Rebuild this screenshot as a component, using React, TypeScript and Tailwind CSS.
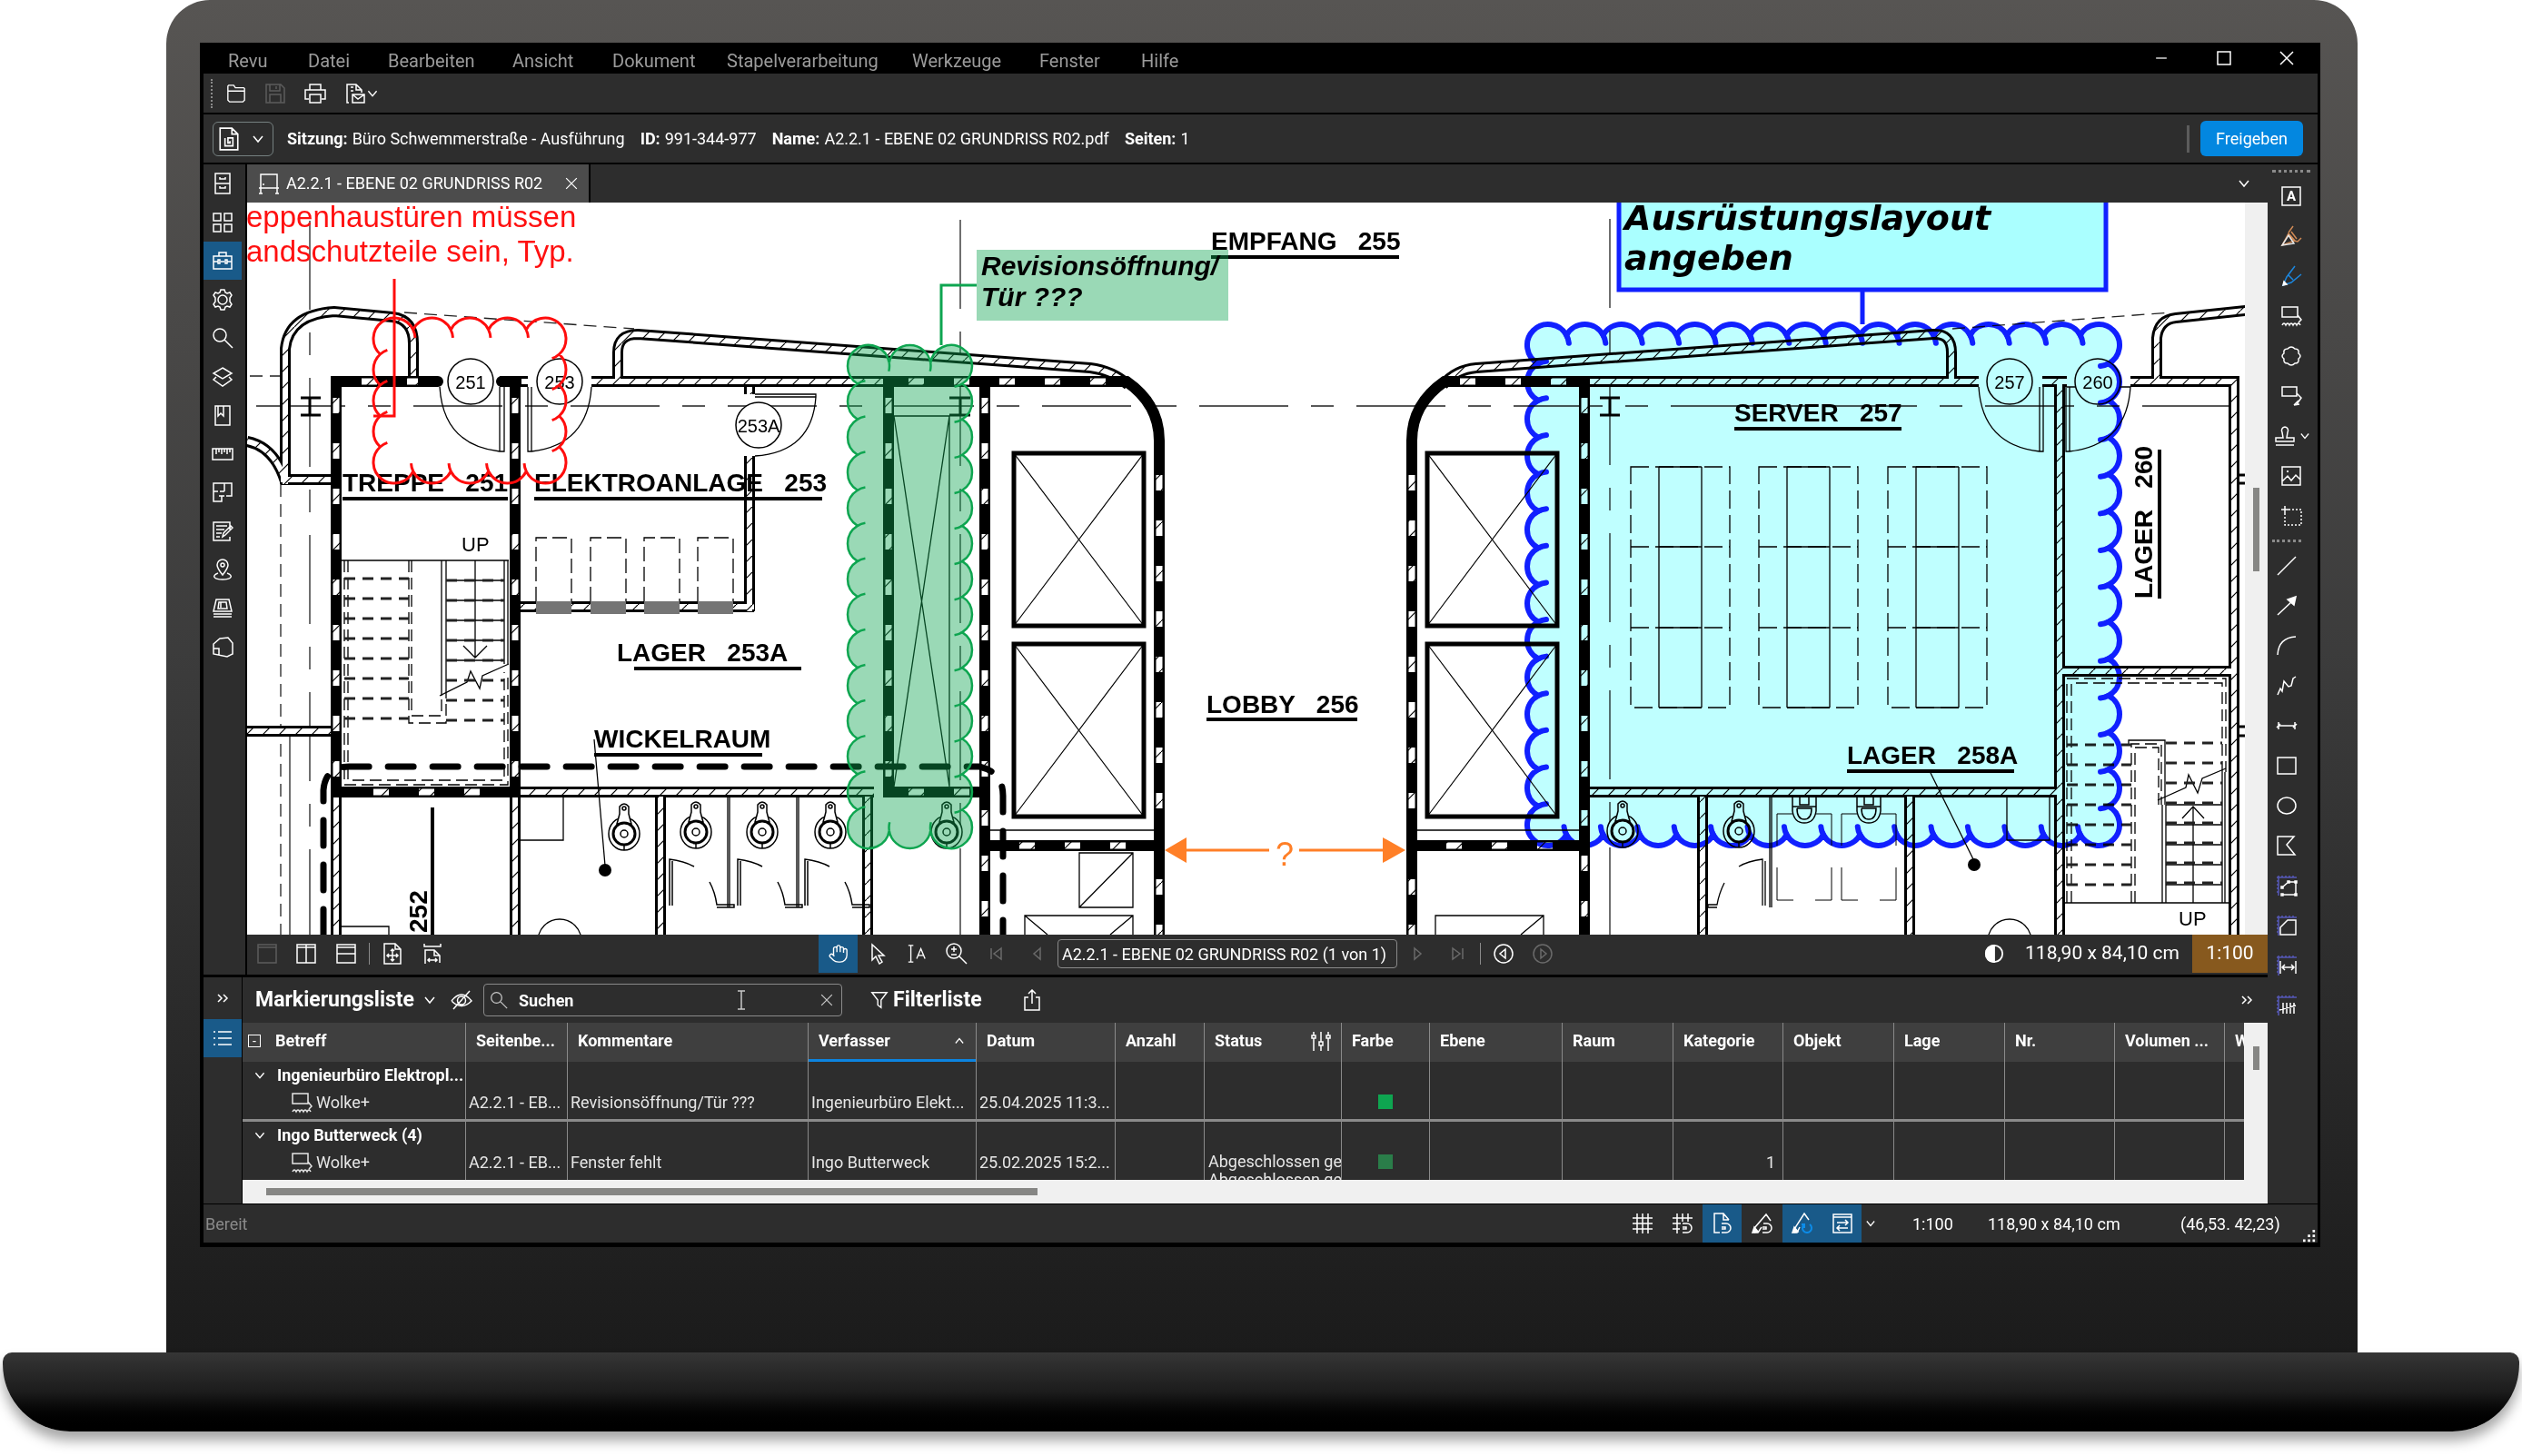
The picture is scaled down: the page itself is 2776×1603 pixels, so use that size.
import React from "react";

type IconName = keyof typeof iconPaths;

// 24x24 outlines, drawn with currentColor
const iconPaths = {
    folder: "M2 9V3l1-1h6l2 3h10l1 1v14l-2 2H4l-2-2V9h20",
    save: "M2 2h16l4 4v16H2zM6 2v7h11V2M13 4v3M6 22v-9h12v9",
    print: "M6 8V2h12v6M5 18H1V8h22v10h-4M6 13h12v9H6z",
    mail: "M5 22H3V2h10l6 6v3M13 2v6h6M7 5h3M7 9h3M9 13h13v9H9zM9 13l6 5 7-5",
    chevronDown: "M7 9l5 6 5-6",
    chevronUp: "M7 15l5-6 5 6",
    chevronsRight: "M7 8l4 4-4 4M13 8l4 4-4 4",
    close: "M5 5l14 14M19 5L5 19",
    minimize: "M5 12h14",
    maximize: "M5 5h14v14H5z",
    studio: "M3 1h12l6 6v16H3zM15 1v6h6M8 11v8h8v-8h-5v5h2v-2",
    sheet: "M3 17V2h18v15M1 17h22M3 17v6M21 17v6M1 23h4M19 23h4M5 13h2",
    cabinet: "M4 1h16v22H4zM4 12h16M9 5v2h6V5M9 15v2h6v-2",
    grid: "M2 2h8v8H2zM14 2h8v8h-8zM2 14h8v8H2zM14 14h8v8h-8z",
    toolbox: "M2 7h20v14H2zM8 7V3h8v4M2 13h5M10 13h4M17 13h5M7 11v4h2v-4zM15 11v4h2v-4z",
    gear: "M10 1h4l1 3 2 1 3-1 2 3-2 3v4l2 3-2 3-3-1-2 1-1 3h-4l-1-3-2-1-3 1-2-3 2-3v-4L2 7l2-3 3 1 2-1zM12 7a5 5 0 1 0 0 10a5 5 0 1 0 0-10",
    search: "M9 2a7 7 0 1 0 0 14a7 7 0 1 0 0-14M14 14l9 9",
    layers: "M12 2l10 6-10 6L2 8zM5 12l-3 3 10 7 10-7-3-3",
    bookmark: "M4 2h16v21H4zM7 2v11l3-3 3 3V2",
    ruler: "M1 6h22v12H1zM5 6v6M8 6v4M11 6v6M14 6v4M17 6v6M20 6v4",
    spaces: "M2 11V2h20v14h-6M2 11h5M9 11h5M14 2v9M2 11v11h9v-6M8 16h6",
    form: "M20 10V2H2v20h18v-4M5 6h12M5 10h9M5 14h6M5 18h4M12 18l1-4 8-8 2 2-8 8z",
    pin: "M12 18C8 13 6 10 6 7a6 6 0 1 1 12 0c0 3-2 6-6 11zM12 5a2 2 0 1 0 0 4a2 2 0 1 0 0-4M7 16c-8 3-4 7 5 7s13-4 5-7",
    plot: "M5 2h14l3 13H2zM8 5h8l1 7H7zM10 5v6M2 18h20M2 21h20",
    polygon: "M9 3l9-1 5 6v12l-6 3-15-3V9zM2 20v-6h6v7",
    textBox: "M2 2h20v20H2z",
    highlight: "M8 10l7 7 4 1 4-4M12 7l6 8M14 1l-5 7M2 22l7-13 7 8z",
    pen: "M16 1L7 13l-4 9 9-3L23 10M9 11l5 5",
    cloudPlus: "M2 2h17v11H2zM19 11l4 5-3 3M2 22q2-4 4 0q2-4 4 0q2-4 4 0q2-4 4 0q2-4 4 0",
    cloud: "M8 4q4-4 8 0q5 0 4 5q4 3 0 6q1 5-4 5q-4 4-8 0q-5 0-4-5q-4-3 0-6q-1-5 4-5z",
    callout: "M2 2h16v10H2zM18 9l5 5-5 7M20 17l-5 5M15 22l6-1",
    stamp: "M12 2a4 4 0 0 0-3 6l1 6H2v4h20v-4h-8l1-6a4 4 0 0 0-3-6M2 22h20",
    image: "M2 2h20v20H2zM2 18l6-6 4 5 5-6 5 5M8 6v2M7 7h2",
    line: "M2 22L22 2",
    arrow: "M2 22L19 6",
    arc: "M2 22Q3 3 22 2",
    polyline: "M2 22l3-7 2 3 2-11 5 6 3-1 2-8 3-2",
    dimension: "M3 12h18M3 8v8M21 8v8M1 14l4-4M19 14l4-4",
    rect: "M2 3h20v18H2z",
    ellipse: "M12 3a10 9 0 1 0 0 18a10 9 0 1 0 0-18",
    flag: "M2 2h18l-8 9 9 11H2z",
    onePage: "M2 2h20v20H2zM2 5h20",
    twoCols: "M2 2h20v20H2zM12 2v20M2 5h20",
    twoRows: "M2 2h20v20H2zM2 12h20M2 5h20",
    fitPage: "M3 1h12l6 6v16H3zM15 1v6h6M12 7v13M6 14h12M10 9l2-2 2 2M10 18l2 2 2-2M8 12l-2 2 2 2M16 12l2 2-2 2",
    fitWidth: "M3 1v3h18V1M4 22V8h10l6 6v8M14 8v6h6M4 22v1M7 19h10M9 17l-2 2 2 2M15 17l2 2-2 2",
    hand: "M18 11V6a2 2 0 0 0-4 0M14 10V4a2 2 0 0 0-4 0v2M10 10V6a2 2 0 0 0-4 0v8M18 8a2 2 0 1 1 4 0v6a8 8 0 0 1-8 8h-2c-3 0-5-1-6-2l-4-4a2 2 0 0 1 3-3L7 15",
    cursor: "M6 2v17l4-4 4 8 3-2-4-7h6z",
    textSelect: "M2 2h6M5 2v20M2 22h6M12 18l5-12 5 12M14 14h6",
    zoom: "M9 1a8 8 0 1 0 0 16a8 8 0 1 0 0-16M15 15l8 8M9 4v6M6 7h6M6 13h6",
    first: "M6 6v12M17 6l-8 6 8 6z",
    prev: "M15 6l-7 6 7 6z",
    next: "M9 6l7 6-7 6z",
    last: "M18 6v12M7 6l8 6-8 6z",
    back: "M12 2a10 10 0 1 0 0 20a10 10 0 1 0 0-20M14 7l-6 5 6 5z",
    forward: "M12 2a10 10 0 1 0 0 20a10 10 0 1 0 0-20M10 7l6 5-6 5z",
    eyeOff: "M1 13q11-14 22 0q-11 11-22 0M12 8a4 4 0 1 0 0 9a4 4 0 1 0 0-9M3 22L21 2",
    filter: "M3 3h18l-7 9v9l-4-3v-6z",
    share: "M8 9H4v14h16V9h-4M12 16V1M8 5l4-4 4 4",
    list: "M7 5h15M7 12h15M7 19h15M2 5h2M2 12h2M2 19h2",
    sliders: "M4 2v4M4 9v14M12 2v11M12 17v6M20 2v4M20 9v14M2 6h4v3H2zM10 13h4v4h-4zM18 6h4v3h-4z",
    raster: "M6 1v22M12 1v22M18 1v22M1 6h22M1 12h22M1 18h22",
    snapGrid: "M6 1v22M12 1v9M18 1v9M1 6h22M1 12h9M1 18h8M12 12h5a5 5 0 0 1 0 10h-5M12 16h4v2h-4",
    snapDoc: "M9 22H3V1h10l6 7M13 1v7h6M11 12h5a5 5 0 0 1 0 10h-5M11 16h4v2h-4",
    snapPen: "M2 22l2-6L16 2l5 7M2 22h5l4-6M13 12h4a5 5 0 0 1 0 10h-5M12 16h4v2h-4",
    reuse: "M2 22l3-7L14 1l5 7M2 22h4l3-6",
    sync: "M2 2h20v20H2zM2 5h20M6 11h11M15 8l3 3-3 3M18 17H7M9 14l-3 3 3 3",
    measureArea: "M7 14l7-6h8v14H7M6 13h2v2H6zM13 7h2v2h-2zM21 7h2v2h-2zM21 21h2v2h-2zM6 21h2v2H6z",
    measurePoly: "M5 22V14l8-8h9v16z",
    measureLength: "M5 7v14M22 7v14M7 14h13M10 11l-3 3 3 3M17 11l3 3-3 3",
    measureCount: "M8 9v12M12 9v12M16 9v12M20 9v12M4 17l18-5",
};

type IconProps = { name: IconName; className?: string };

const Icon: React.FC<IconProps> = ({ name, className = "size-6" }) => (
    <svg viewBox="0 0 24 24" className={`shrink-0 ${className}`} fill="none" stroke="currentColor" strokeWidth={1.5} aria-hidden="true">
        <path d={iconPaths[name]} />
        {name.startsWith("measure") && (
            <path d="M1 3h22M3 1v22M7 1v2M11 1v2M15 1v2M19 1v2M1 7h2M1 11h2M1 15h2M1 19h2" stroke="#5558b8" />
        )}
        {name === "arrow" && <path d="M22 2l-2 9-7-6z" fill="currentColor" />}
        {name === "pen" && <path d="M3 22l1-4 3 3z" fill="white" stroke="white" />}
        {name === "highlight" && <path d="M2 22l7-11 6 9z" stroke="#e8e8e8" />}
        {name === "reuse" && <path d="M20 13a5 5 0 1 1-6 0M14 17v-4h-3" stroke="#0c8ce9" strokeWidth={2} />}
        {(name === "reuse" || name === "snapPen") && <path d="M1 22l2-6 4 5z" fill="currentColor" />}
    </svg>
);

type ToolButtonProps = { icon: IconName; label: string; className: string; iconClass?: string; children?: React.ReactNode };

const ToolButton: React.FC<ToolButtonProps> = ({ icon, label, className, iconClass, children }) => (
    <button type="button" aria-label={label} className={`flex shrink-0 items-center justify-center ${className}`}>
        <Icon name={icon} className={iconClass} />
        {children}
    </button>
);

const menuItems = [
    { label: "Revu", width: "w-[88px]" },
    { label: "Datei", width: "w-[88px]" },
    { label: "Bearbeiten", width: "w-[137px]" },
    { label: "Ansicht", width: "w-[110px]" },
    { label: "Dokument", width: "w-[126px]" },
    { label: "Stapelverarbeitung", width: "w-[204px]" },
    { label: "Werkzeuge", width: "w-[140px]" },
    { label: "Fenster", width: "w-[112px]" },
    { label: "Hilfe", width: "w-[60px]" },
];

const leftTools: { icon: IconName; label: string }[] = [
    { icon: "cabinet", label: "Dateizugriff" },
    { icon: "grid", label: "Miniaturansichten" },
    { icon: "toolbox", label: "Werkzeugkasten" },
    { icon: "gear", label: "Eigenschaften" },
    { icon: "search", label: "Suche" },
    { icon: "layers", label: "Ebenen" },
    { icon: "bookmark", label: "Lesezeichen" },
    { icon: "ruler", label: "Messungen" },
    { icon: "spaces", label: "Bereiche" },
    { icon: "form", label: "Formulare" },
    { icon: "pin", label: "Orte" },
    { icon: "plot", label: "Sets" },
    { icon: "polygon", label: "3D-Modell" },
];

const markupTools: { icon: IconName; label: string; color?: string }[] = [
    { icon: "textBox", label: "Textfeld" },
    { icon: "highlight", label: "Hervorheben", color: "text-[#d08a55]" },
    { icon: "pen", label: "Stift", color: "text-[#1c86dd]" },
    { icon: "cloudPlus", label: "Wolke+" },
    { icon: "cloud", label: "Wolke" },
    { icon: "callout", label: "Legende" },
    { icon: "stamp", label: "Stempel" },
    { icon: "image", label: "Bild" },
];

const shapeTools: { icon: IconName; label: string }[] = [
    { icon: "line", label: "Linie" },
    { icon: "arrow", label: "Pfeil" },
    { icon: "arc", label: "Bogen" },
    { icon: "polyline", label: "Polylinie" },
    { icon: "dimension", label: "Bemaßung" },
    { icon: "rect", label: "Rechteck" },
    { icon: "ellipse", label: "Ellipse" },
    { icon: "flag", label: "Polygon" },
    { icon: "measureArea", label: "Messen" },
    { icon: "measurePoly", label: "Fläche" },
    { icon: "measureLength", label: "Länge" },
    { icon: "measureCount", label: "Zählen" },
];

/* ---------- Floor plan ---------- */

type Point = { x: number; y: number };

// Revision cloud: circles set along a rectangle, each one overlapping the next
const cloudPaths = (x0: number, y0: number, x1: number, y1: number, nx: number, ny: number, r: number) => {
    const centers: Point[] = [];
    for (let i = 0; i < nx; i++) centers.push({ x: x0 + ((x1 - x0) * i) / nx, y: y0 });
    for (let i = 0; i < ny; i++) centers.push({ x: x1, y: y0 + ((y1 - y0) * i) / ny });
    for (let i = 0; i < nx; i++) centers.push({ x: x1 - ((x1 - x0) * i) / nx, y: y1 });
    for (let i = 0; i < ny; i++) centers.push({ x: x0, y: y1 - ((y1 - y0) * i) / ny });

    const count = centers.length;
    const joints = centers.map((a, i) => {
        const b = centers[(i + 1) % count];
        const dx = b.x - a.x;
        const dy = b.y - a.y;
        const len = Math.hypot(dx, dy);
        const h = Math.sqrt(Math.max(r * r - (len * len) / 4, 0));
        return { x: (a.x + b.x) / 2 + (dy / len) * h, y: (a.y + b.y) / 2 - (dx / len) * h };
    });

    let outline = `M${joints[count - 1].x} ${joints[count - 1].y}`;
    let hooks = "";
    centers.forEach((c, i) => {
        const from = joints[(i + count - 1) % count];
        const to = joints[i];
        const start = Math.atan2(from.y - c.y, from.x - c.x);
        const end = Math.atan2(to.y - c.y, to.x - c.x);
        const sweep = (end - start + Math.PI * 4) % (Math.PI * 2);
        outline += `A${r} ${r} 0 ${sweep > Math.PI ? 1 : 0} 1 ${to.x} ${to.y}`;
        const hookEnd = end + 0.4;
        hooks += `M${to.x} ${to.y}A${r} ${r} 0 0 1 ${c.x + r * Math.cos(hookEnd)} ${c.y + r * Math.sin(hookEnd)}`;
    });
    return { outline: outline + "Z", hooks };
};

const redCloud = cloudPaths(434, 373, 600, 509, 4, 4, 23);
const greenCloud = cloudPaths(956, 403, 1047, 911, 2, 13, 23);
const blueCloud = cloudPaths(1704, 380, 2310, 908, 15, 13, 23);

const hatchedWalls = [
    "M314 533V384Q318 346 368 343L432 349Q455 352 455 378V420",
    "M309 528H366",
    "M272 486Q302 492 314 530",
    "M272 805H366",
    "M680 420V388Q680 368 702 368L1200 405Q1225 408 1242 424",
    "M651 420H974",
    "M574 420H581",
    "M825 426V434M825 502V673",
    "M573 668H830",
    "M573 872H962",
    "M370 877V1036",
    "M567 877V1036",
    "M727 877V1036",
    "M955 877V1036",
    "M1588 424Q1602 407 1625 405L2128 368Q2148 367 2148 388V420",
    "M1750 420H2178",
    "M2248 420H2275M2267 420V1036",
    "M2345 420H2459V1036",
    "M2374 420V372Q2376 352 2395 350L2480 341",
    "M1750 872H2267",
    "M1874 877V1036",
    "M2102 877V1036",
    "M2267 739H2459",
];

const blackWalls = [
    "M370 415V878",
    "M364 420H482",
    "M550 420H574M567 415V878",
    "M364 872H573",
    "M978 415V878",
    "M1084 415V1036",
    "M972 420H1240Q1276 445 1276 485V1036",
    "M972 872H1090",
    "M1078 931H1276",
    "M1744 415V1036",
    "M1750 420H1590Q1554 445 1554 485V1036",
    "M1554 931H1744",
];

const wallWindows = [
    "M370 438V866",
    "M398 420H460",
    "M567 438V866",
    "M411 872H540",
    "M978 438V866",
    "M1084 438V860M1084 892V1029",
    "M1000 420H1220",
    "M1276 523V920M1276 968V1029",
    "M1000 872H1070",
    "M1122 931H1250",
    "M1744 438V860M1744 892V1029",
    "M1607 420H1738",
    "M1554 523V920M1554 968V1029",
    "M1592 931H1730",
];

type RoomLabelProps = { x: number; y: number; text: string; from?: number; to: number; lineY: number };

const RoomLabel: React.FC<RoomLabelProps> = ({ x, y, text, from = x, to, lineY }) => (
    <g>
        <text x={x} y={y} fontSize={28} fontWeight={700} className="whitespace-pre">{text}</text>
        <path d={`M${from} ${lineY}H${to}`} stroke="black" strokeWidth={4} />
    </g>
);

const DoorTag: React.FC<{ x: number; y: number; text: string }> = ({ x, y, text }) => (
    <g>
        <circle cx={x} cy={y} r={25} fill="white" stroke="black" strokeWidth={1.5} />
        <text x={x} y={y + 8} fontSize={20} textAnchor="middle">{text}</text>
    </g>
);

const Toilet: React.FC<{ x: number; y: number }> = ({ x, y }) => (
    <g transform={`translate(${x} ${y})`} fill="white" stroke="black" strokeWidth={1.5}>
        <ellipse rx={17} ry={18} />
        <path d="M-5 -30Q0 -36 5 -30V-22Q7 -14 8 -11H-8Q-7 -14 -5 -22Z" />
        <circle r={12} strokeWidth={3} />
        <circle r={4} />
        <circle cy={-28} r={2} />
        <path d="M0 13V18" />
    </g>
);

const Sink: React.FC<{ x: number }> = ({ x }) => (
    <g transform={`translate(${x} 0)`} fill="none" stroke="black" strokeWidth={1.5}>
        <path d="M-13 878V888H13V878M-13 888V893Q-11 906 0 906T13 893V888M-5 878V886H5V878M-8 890H8Q8 902 0 902T-8 890" />
        <path d="M-30 931V896H-13M13 896H30V931M-30 955V991H-12M12 991H30V955" strokeWidth={1} />
    </g>
);

const StallDoor: React.FC<{ x: number }> = ({ x }) => (
    <path
        transform={`translate(${x} 0)`}
        d="M0 997V946Q16 948 27 954M3 997V948M44 971Q50 982 52 996H71V999H52"
        fill="none"
        stroke="black"
        strokeWidth={1.5}
    />
);

const Elevator: React.FC<{ x: number; y: number }> = ({ x, y }) => (
    <g fill="none" stroke="black">
        <rect x={x} y={y} width={143} height={190} strokeWidth={5} />
        <path d={`M${x} ${y}l143 190M${x + 143} ${y}l-143 190`} strokeWidth={1.2} />
    </g>
);

const treadLines = (x0: number, x1: number, top: number, count: number) =>
    Array.from({ length: count }, (_, i) => `M${x0} ${top + i * 22}H${x1}`).join("");

const rackColumns = [1795, 1936, 2078];
const panelColumns = [590, 650, 709, 768];

const FloorPlan: React.FC = () => (
    <svg
        viewBox="272 223 2199 806"
        className="block h-auto min-w-0 flex-1 bg-white font-['Liberation_Sans',sans-serif]"
        role="img"
        aria-label="Grundriss Ebene 02"
    >
        <defs>
            <pattern id="hatch" width="18" height="18" patternUnits="userSpaceOnUse">
                <rect width="18" height="18" fill="white" />
                <path d="M0 18L18 0" stroke="black" strokeWidth="1.2" />
            </pattern>
        </defs>

        {/* Axis lines */}
        <g fill="none" stroke="#222" strokeWidth={1.3}>
            <path d="M341 243V1029M1057 242V1029M1772 241V1029" strokeDasharray="98 25 25 25" />
            <path d="M282 447H2471" strokeDasharray="98 25 25 25" />
            <path d="M275 414H309M309 533V1029M445 344L698 362M2149 362L2390 344" strokeDasharray="14 8" />
            <path d="M319 811V1029" />
        </g>
        <path d="M331 438H353M331 457H353M341 438V457M1045 438H1068M1045 457H1068M1057 438V457M1761 438H1783M1761 457H1783M1772 438V457" stroke="black" strokeWidth={3} />

        {/* Stairs on the left */}
        <g fill="none" stroke="black" strokeWidth={1.3}>
            <path d="M376 617H560M486 617V766M491 617V766M555 617V731M559 617V731M523 617V724M510 711L523 724L536 711" />
            <path d="M484 766L514 751L518 739L528 758L531 744L560 731" />
            <path d={treadLines(491, 555, 639, 5)} />
            <path d="M379 617V864H559V740M383 617V859H555V740M450 617V796H491V766M453 617V788H486V766" strokeDasharray="13 6" />
        </g>
        <path d={treadLines(379, 450, 637, 8) + treadLines(491, 555, 639, 8)} stroke="#222" strokeWidth={3} strokeDasharray="12 8" />

        {/* Stairs on the right */}
        <g fill="none" stroke="black" strokeWidth={1.3}>
            <path d="M2272 994H2454M2380 886V994M2384 886V994M2446 850V994M2449 850V994M2414 994V888M2402 901L2414 888L2426 901" />
            <path d="M2375 881L2406 867L2409 853L2419 873L2424 857L2450 846" />
            <path d={treadLines(2384, 2446, 886, 5)} />
            <path d="M2343 820V815H2383V886" />
            <path d="M2275 994V747H2450V850M2280 994V752H2446V850M2346 994V819H2379V886M2350 994V823H2376V886" strokeDasharray="13 6" />
        </g>
        <path d={treadLines(2275, 2346, 820, 8) + treadLines(2384, 2446, 818, 8)} stroke="#222" strokeWidth={3} strokeDasharray="12 8" />

        {/* Walls */}
        <g fill="none">
            {hatchedWalls.map((d) => <path key={d} d={d} stroke="black" strokeWidth={12} />)}
            {hatchedWalls.map((d) => <path key={d} d={d} stroke="url(#hatch)" strokeWidth={6} />)}
            {blackWalls.map((d) => <path key={d} d={d} stroke="black" strokeWidth={12} />)}
            {wallWindows.map((d) => <path key={d} d={d} stroke="url(#hatch)" strokeWidth={7} strokeDasharray="17 33" />)}
            <path d="M480 420H482M552 420H554" stroke="black" strokeWidth={12} strokeLinecap="round" />
            <path d="M2464 523H2471M2464 532H2471M2464 800H2471M2464 810H2471" stroke="black" strokeWidth={3} />
        </g>

        {/* Doors */}
        <g fill="none" stroke="black" strokeWidth={1.3}>
            <path d="M550 426V497H555V426M484 426Q488 490 550 497" />
            <path d="M581 426V497H585V426M651 426Q647 490 585 497" />
            <path d="M831 434H898V437H831M898 437Q894 498 831 502" />
            <path d="M2245 426V497H2249V426M2178 426Q2182 490 2245 497" />
            <path d="M2274 426V497H2278V426M2345 426Q2341 490 2278 497M2275 426H2345" />
        </g>
        <DoorTag x={518} y={420} text="251" />
        <DoorTag x={616} y={420} text="253" />
        <DoorTag x={835} y={468} text="253A" />
        <DoorTag x={2212} y={420} text="257" />
        <DoorTag x={2309} y={420} text="260" />

        {/* Electrical panels */}
        {panelColumns.map((x) => (
            <g key={x}>
                <rect x={x} y={662} width={39} height={14} fill="#757575" />
                <path d={`M${x} 662V592H${x + 39}V662`} fill="none" stroke="black" strokeWidth={1.3} strokeDasharray="16 6" />
            </g>
        ))}

        {/* Elevators and shaft */}
        <Elevator x={1116} y={499} />
        <Elevator x={1116} y={709} />
        <Elevator x={1571} y={499} />
        <Elevator x={1571} y={709} />
        <g fill="none" stroke="black" strokeWidth={1.3}>
            <path d="M984 458H1045V866M984 458L1045 866M1045 458L984 866M1090 914H1270M1560 914H1738" />
            <path d="M1188 939H1247V999H1188ZM1188 999L1247 939M1128 1029V1008H1247V1029M1128 1008L1153 1029M1247 1008L1222 1029" />
            <path d="M1580 1029V1008H1699V1029M1699 1008L1674 1029" />
            <path d="M573 925H620V877M375 1020H428V1029M801 877V999M803 877V999M877 877V999M879 877V999M1948 877V999M1950 877V999M2209 877V925H2256V877" />
            <path d="M592 1036A24 24 0 0 1 640 1036M2188 1036A24 24 0 0 1 2236 1036" />
            <path d="M654 814L666 953M2125 851L2173 948" />
            <path d="M1940 997V946Q1924 948 1914 954M1943 997V948M1898 972Q1892 984 1890 996H1880V999H1890" />
        </g>
        <path d="M476 889V1029" stroke="black" strokeWidth={4} />
        <circle cx={666} cy={958} r={7} />
        <circle cx={2173} cy={952} r={7} />

        {/* Server racks */}
        {rackColumns.map((x) => (
            <g key={x} fill="none" stroke="black" strokeWidth={1.3}>
                <path d={`M${x} 514H${x + 109}V779H${x}ZM${x} 602H${x + 109}M${x} 691H${x + 109}`} strokeDasharray="20 7" />
                <path d={`M${x + 31} 514V779M${x + 78} 514V779M${x + 31} 514H${x + 78}M${x + 31} 602H${x + 78}M${x + 31} 691H${x + 78}M${x + 31} 779H${x + 78}`} />
            </g>
        ))}

        {/* Sanitary */}
        <Toilet x={687} y={918} />
        <Toilet x={766} y={916} />
        <Toilet x={839} y={916} />
        <Toilet x={914} y={916} />
        <Toilet x={1042} y={916} />
        <Toilet x={1786} y={915} />
        <Toilet x={1914} y={915} />
        <Sink x={1986} />
        <Sink x={2057} />
        <StallDoor x={737} />
        <StallDoor x={812} />
        <StallDoor x={886} />

        {/* Escape route */}
        <path
            d="M356 1029V870Q358 844 384 844H1078Q1104 850 1104 876V1029"
            fill="none"
            stroke="black"
            strokeWidth={7}
            strokeLinecap="round"
            strokeDasharray="28 21"
        />

        {/* Room labels */}
        <RoomLabel x={1333} y={275} text="EMPFANG   255" to={1540} lineY={283} />
        <RoomLabel x={377} y={541} text="TREPPE   251" to={559} lineY={549} />
        <RoomLabel x={588} y={541} text="ELEKTROANLAGE   253" to={905} lineY={549} />
        <RoomLabel x={679} y={728} text="LAGER   253A" from={698} to={882} lineY={736} />
        <RoomLabel x={654} y={823} text="WICKELRAUM" to={839} lineY={831} />
        <RoomLabel x={1328} y={785} text="LOBBY   256" to={1494} lineY={792} />
        <RoomLabel x={1909} y={464} text="SERVER   257" to={2093} lineY={472} />
        <RoomLabel x={2033} y={841} text="LAGER   258A" to={2217} lineY={849} />
        <g transform="rotate(-90 2371 659)">
            <RoomLabel x={2371} y={657} text="LAGER   260" to={2535} lineY={665} />
        </g>
        <text transform="rotate(-90 470 1027)" x={470} y={1027} fontSize={28} fontWeight={700}>252</text>
        <text x={508} y={607} fontSize={22}>UP</text>
        <text x={2398} y={1019} fontSize={22}>UP</text>

        {/* Blue markup */}
        <g className="mix-blend-multiply" fill="none" stroke="#1020ff" strokeWidth={6} strokeLinecap="round">
            <path d={blueCloud.outline} fill="#bfffff" />
            <path d={blueCloud.hooks} />
        </g>
        <path d="M2050 321V357" stroke="#1020ff" strokeWidth={5} />
        <rect x={1782} y={200} width={536} height={119} fill="#aaffff" stroke="#1020ff" strokeWidth={5} />
        <g fontSize={38} fontWeight={700} fontStyle="italic" className="font-['DejaVu_Sans',sans-serif]">
            <text x={1788} y={253}>Ausrüstungslayout</text>
            <text x={1788} y={297}>angeben</text>
        </g>

        {/* Green markup */}
        <path d={greenCloud.outline} fill="#0ea550" fillOpacity={0.42} stroke="#0ea550" strokeWidth={2.5} />
        <path d={greenCloud.hooks} fill="none" stroke="#0ea550" strokeWidth={2.5} />
        <path d="M1075 314H1036V380" fill="none" stroke="#0ea550" strokeWidth={3} />
        <rect x={1075} y={275} width={277} height={78} fill="#0ea550" fillOpacity={0.42} />
        <g fontSize={30} fontWeight={700} fontStyle="italic">
            <text x={1080} y={303}>Revisionsöffnung/</text>
            <text x={1080} y={337}>Tür ???</text>
        </g>

        {/* Red markup */}
        <path d={redCloud.outline + redCloud.hooks} fill="none" stroke="#ff0d0d" strokeWidth={3} />
        <path d="M434 307V458H411" fill="none" stroke="#ff0d0d" strokeWidth={3} />
        <g fontSize={33} fill="#ff1010">
            <text x={271} y={250}>eppenhaustüren müssen</text>
            <text x={271} y={288}>andschutzteile sein, Typ.</text>
        </g>

        {/* Orange dimension */}
        <g fill="#ff7f27">
            <path d="M1300 936H1397M1430 936H1530" stroke="#ff7f27" strokeWidth={3} />
            <path d="M1282 936L1306 922V950ZM1547 936L1522 922V950Z" />
            <text x={1414} y={953} fontSize={36} textAnchor="middle">?</text>
        </g>
    </svg>
);

/* ---------- Markups list ---------- */

const columns = [
    { label: "Betreff", width: "w-[246px]" },
    { label: "Seitenbe...", width: "w-[112px]" },
    { label: "Kommentare", width: "w-[265px]" },
    { label: "Verfasser", width: "w-[185px]" },
    { label: "Datum", width: "w-[153px]" },
    { label: "Anzahl", width: "w-[98px]" },
    { label: "Status", width: "w-[151px]" },
    { label: "Farbe", width: "w-[97px]" },
    { label: "Ebene", width: "w-[146px]" },
    { label: "Raum", width: "w-[122px]" },
    { label: "Kategorie", width: "w-[121px]" },
    { label: "Objekt", width: "w-[122px]" },
    { label: "Lage", width: "w-[122px]" },
    { label: "Nr.", width: "w-[121px]" },
    { label: "Volumen ...", width: "w-[121px]" },
    { label: "W", width: "w-auto" },
];

const groups = [
    {
        title: "Ingenieurbüro Elektropl...",
        cells: ["Wolke+", "A2.2.1 - EB...", "Revisionsöffnung/Tür ???", "Ingenieurbüro Elekt...", "25.04.2025 11:3...", "", "", "bg-[#0ea550]", "", "", ""],
    },
    {
        title: "Ingo Butterweck (4)",
        cells: ["Wolke+", "A2.2.1 - EB...", "Fenster fehlt", "Ingo Butterweck", "25.02.2025 15:2...", "", "Abgeschlossen ge", "bg-[#2a7d49]", "", "", "1"],
    },
];

const MarkupTable: React.FC = () => (
    <table className="w-full table-fixed border-separate border-spacing-0 text-left text-[18px]">
        <colgroup>
            {columns.map((column) => <col key={column.label} className={column.width} />)}
        </colgroup>
        <thead>
            <tr className="h-[43px] bg-[#3f3f3f]">
                {columns.map((column, index) => (
                    <th
                        key={column.label}
                        scope="col"
                        className={`overflow-hidden p-0 pb-1 font-bold whitespace-nowrap ${index < 15 ? "border-r border-[#8a8a8a]" : ""} ${index === 3 ? "shadow-[inset_0_-3px_#0c84e0]" : ""}`}
                    >
                        <span className={`flex items-center ${index === 0 ? "gap-3 pl-1.5" : "pl-[11px]"}`}>
                            {index === 0 && (
                                <button type="button" aria-label="Alle einklappen" className="mr-1 flex size-[14px] items-center justify-center border border-white text-sm leading-none font-normal">-</button>
                            )}
                            {column.label}
                            {index === 3 && <Icon name="chevronUp" className="mr-2 ml-auto size-5" />}
                            {index === 6 && <Icon name="sliders" className="mr-2.5 ml-auto size-6" />}
                        </span>
                    </th>
                ))}
            </tr>
        </thead>
        {groups.map((group, groupIndex) => (
            <tbody key={group.title}>
                <tr className="h-[30px]">
                    {columns.map((column, index) => (
                        <td key={column.label} className={`overflow-hidden p-0 leading-[28px] whitespace-nowrap ${index < 15 ? "border-r border-[#8a8a8a]" : ""}`}>
                            {index === 0 && (
                                <span className="flex items-center gap-2 pl-2 font-bold">
                                    <Icon name="chevronDown" className="size-[22px]" />
                                    {group.title}
                                </span>
                            )}
                        </td>
                    ))}
                </tr>
                <tr className="h-[36px]">
                    {columns.map((column, index) => {
                        const value = group.cells[index];
                        return (
                            <td
                                key={column.label}
                                className={`overflow-hidden p-0 align-top leading-[30px] whitespace-nowrap text-[#e6e6e6] ${index < 15 ? "border-r border-[#8a8a8a]" : ""} ${groupIndex === 0 ? "border-b-3 border-b-[#8a8a8a]" : ""}`}
                            >
                                {index === 0 ? (
                                    <span className="flex items-center gap-1 pl-[53px]">
                                        <Icon name="cloudPlus" />
                                        {value}
                                    </span>
                                ) : index === 6 ? (
                                    <span className="block pt-1 pl-1 leading-5">
                                        {value}
                                        <br />
                                        {value}
                                    </span>
                                ) : index === 7 ? (
                                    <span className={`mx-auto mt-[6px] block size-[16px] ${value}`} />
                                ) : (
                                    <span className={`block px-[3px] ${index === 10 ? "pr-2 text-right" : ""}`}>{value}</span>
                                )}
                            </td>
                        );
                    })}
                </tr>
            </tbody>
        ))}
    </table>
);

const MarkupPanel: React.FC = () => (
    <section className="flex border-t-3 border-black">
        <div className="flex w-[43px] shrink-0 flex-col border-r border-black">
            <ToolButton icon="chevronsRight" label="Ausklappen" className="h-[46px] w-[42px]" />
            <ToolButton icon="list" label="Markierungsliste" className="h-[42px] w-[42px] bg-[#195a89]" />
        </div>
        <div className="min-w-0 flex-1">
            <div className="flex h-[50px] items-center">
                <h2 className="pl-[14px] text-[23px] font-bold">Markierungsliste</h2>
                <ToolButton icon="chevronDown" label="Liste wählen" className="w-[34px]" />
                <ToolButton icon="eyeOff" label="Markierungen ausblenden" className="mr-[6px] w-[36px]" />
                <label className="flex h-[36px] w-[395px] items-center rounded-sm border border-[#8a8a8a] px-1.5 text-[#c8c8c8]">
                    <Icon name="search" className="mr-3 size-5" />
                    <input type="text" aria-label="Suchen" placeholder="Suchen" className="w-[240px] bg-transparent text-[18px] font-bold text-white outline-none placeholder:text-white" />
                    <svg viewBox="0 0 10 22" className="h-[22px] w-[10px]" fill="none" stroke="currentColor" strokeWidth={1.5} aria-hidden="true">
                        <path d="M1 1h8M5 1v20M1 21h8" />
                    </svg>
                    <ToolButton icon="close" label="Suche leeren" className="ml-auto w-[20px]" iconClass="size-5" />
                </label>
                <button type="button" className="ml-[30px] flex items-center gap-1 text-[23px] font-bold">
                    <Icon name="filter" className="size-[22px]" />
                    Filterliste
                </button>
                <ToolButton icon="share" label="Exportieren" className="ml-[43px]" />
                <ToolButton icon="chevronsRight" label="Mehr" className="mr-[11px] ml-auto" />
            </div>
            <div className="flex">
                <div className="min-w-0 flex-1">
                    <div className="h-[173px] overflow-hidden">
                        <MarkupTable />
                    </div>
                    <div className="h-[26px] bg-[#f0f0f0] pt-[9px] pl-[26px]">
                        <div className="h-[8px] w-[39%] bg-[#868684]" />
                    </div>
                </div>
                <div className="flex w-[26px] justify-center bg-[#f0f0f0] pt-[26px]">
                    <div className="h-[26px] w-[7px] bg-[#868684]" />
                </div>
            </div>
        </div>
    </section>
);

/* ---------- Application window ---------- */

const TitleBar: React.FC = () => (
    <header className="flex h-[34px] items-center justify-between bg-black">
        <nav className="flex pt-[6px] pl-[27px] text-[20px] leading-7 text-[#9b9b9b]">
            {menuItems.map((item) => (
                <button key={item.label} type="button" className={`text-left whitespace-nowrap ${item.width}`}>{item.label}</button>
            ))}
        </nav>
        <div className="flex">
            <ToolButton icon="minimize" label="Minimieren" className="w-[69px]" iconClass="size-5" />
            <ToolButton icon="maximize" label="Maximieren" className="w-[69px]" iconClass="size-6" />
            <ToolButton icon="close" label="Schließen" className="w-[69px]" iconClass="size-6" />
        </div>
    </header>
);

const Toolbar: React.FC = () => (
    <div className="flex h-[45px] items-center border-b-2 border-black pl-[8px]">
        <span className="mr-[4px] h-[32px] border-l-2 border-dotted border-[#8a8a8a]" />
        <ToolButton icon="folder" label="Öffnen" className="w-[43px]" iconClass="size-[22px]" />
        <ToolButton icon="save" label="Speichern" className="w-[44px] text-[#5c5c5c]" />
        <ToolButton icon="print" label="Drucken" className="w-[44px]" />
        <ToolButton icon="mail" label="E-Mail" className="ml-[10px]">
            <Icon name="chevronDown" className="-ml-1 size-[22px]" />
        </ToolButton>
    </div>
);

const SessionBar: React.FC = () => (
    <div className="flex h-[55px] items-center border-b-2 border-black pr-[16px] pl-[10px]">
        <button type="button" aria-label="Sitzung wählen" className="flex h-[38px] w-[67px] items-center justify-between rounded-md border border-[#758080] px-[4px]">
            <Icon name="studio" className="size-[26px]" />
            <Icon name="chevronDown" />
        </button>
        <dl className="flex gap-[17px] pl-[15px] text-[18px] whitespace-nowrap">
            <div className="flex gap-[5px]"><dt className="font-bold">Sitzung:</dt><dd>Büro Schwemmerstraße - Ausführung</dd></div>
            <div className="flex gap-[5px]"><dt className="font-bold">ID:</dt><dd>991-344-977</dd></div>
            <div className="flex gap-[5px]"><dt className="font-bold">Name:</dt><dd>A2.2.1 - EBENE 02 GRUNDRISS R02.pdf</dd></div>
            <div className="flex gap-[5px]"><dt className="font-bold">Seiten:</dt><dd>1</dd></div>
        </dl>
        <span className="mr-[12px] ml-auto h-[30px] w-[3px] bg-[#5c5c5c]" />
        <button type="button" className="h-[39px] w-[113px] rounded-md bg-[#0387e0] text-[18px]">Freigeben</button>
    </div>
);

const LeftToolbar: React.FC = () => (
    <nav className="w-[48px] shrink-0 border-r-2 border-black">
        <div className="flex h-[552px] w-[42px] flex-col justify-between">
            {leftTools.map((tool) => (
                <ToolButton key={tool.label} icon={tool.icon} label={tool.label} className={`h-[42px] w-[42px] ${tool.icon === "toolbox" ? "bg-[#195a89]" : ""}`} />
            ))}
        </div>
    </nav>
);

const RightToolbar: React.FC = () => (
    <nav className="w-[55px] shrink-0 pt-[6px]">
        <div className="mb-[4px] ml-[5px] w-[42px] border-t-3 border-dotted border-[#8a8a8a]" />
        {markupTools.map((tool) => (
            <div key={tool.label} className="flex h-[44px] items-center pl-[14px]">
                <button type="button" aria-label={tool.label} className={`flex items-center ${tool.icon === "stamp" ? "-ml-[7px]" : ""} ${tool.color ?? ""}`}>
                    <span className="grid place-items-center">
                        <Icon name={tool.icon} className="col-start-1 row-start-1 size-6" />
                        {tool.icon === "textBox" && <span className="col-start-1 row-start-1 text-[15px] font-bold">A</span>}
                    </span>
                    {tool.icon === "stamp" && <Icon name="chevronDown" className="size-5" />}
                </button>
            </div>
        ))}
        <button type="button" aria-label="Schnappschuss" className="flex h-[44px] items-center pl-[14px]">
            <svg viewBox="0 0 24 24" className="size-6" fill="none" stroke="currentColor" strokeWidth={1.5} aria-hidden="true">
                <path d="M5 1v8M1 5h8" />
                <path d="M5 9v13h18V5H9" strokeDasharray="2 2" />
            </svg>
        </button>
        <div className="mt-[4px] mb-[4px] ml-[5px] w-[32px] border-t-3 border-dotted border-[#8a8a8a]" />
        {shapeTools.map((tool) => (
            <ToolButton key={tool.label} icon={tool.icon} label={tool.label} className="ml-[9px] h-[44px]" />
        ))}
    </nav>
);

const DocumentTabs: React.FC = () => (
    <div className="flex h-[42px] items-center justify-between">
        <div className="flex h-full w-[378px] items-center border-r-2 border-black bg-[#4c4c4c] pl-[12px] text-[18px]">
            <Icon name="sheet" className="mr-[7px] size-6" />
            <span className="flex-1 pb-[2px] whitespace-nowrap">A2.2.1 - EBENE 02 GRUNDRISS R02</span>
            <ToolButton icon="close" label="Tab schließen" className="mr-[9px]" iconClass="size-5" />
        </div>
        <ToolButton icon="chevronDown" label="Alle Tabs" className="mr-[14px]" />
    </div>
);

const DocumentBar: React.FC = () => (
    <div className="flex h-[44px] items-center pb-[2px]">
        <ToolButton icon="onePage" label="Einzelansicht" className="w-[43px] text-[#5c5c5c]" />
        <ToolButton icon="twoCols" label="Vertikal teilen" className="w-[44px]" />
        <ToolButton icon="twoRows" label="Horizontal teilen" className="w-[44px]" />
        <span className="mx-[3px] h-[24px] w-px bg-[#8a8a8a]" />
        <ToolButton icon="fitPage" label="Seite einpassen" className="w-[44px]" />
        <ToolButton icon="fitWidth" label="Breite einpassen" className="mr-[403px] w-[44px]" />
        <ToolButton icon="hand" label="Verschieben" className="h-[42px] w-[43px] bg-[#195a89]" iconClass="size-[22px]" />
        <ToolButton icon="cursor" label="Auswählen" className="w-[43px]" />
        <ToolButton icon="textSelect" label="Text auswählen" className="w-[44px]" iconClass="size-[22px]" />
        <ToolButton icon="zoom" label="Zoom" className="w-[44px]" />
        <ToolButton icon="first" label="Erste Seite" className="w-[44px] text-[#6a6a6a]" />
        <ToolButton icon="prev" label="Vorherige Seite" className="w-[45px] text-[#6a6a6a]" />
        <input
            type="text"
            aria-label="Seite"
            readOnly
            value="A2.2.1 - EBENE 02 GRUNDRISS R02 (1 von 1)"
            className="h-[32px] w-[374px] rounded-sm border border-[#8a8a8a] bg-transparent px-[4px] text-[18px]"
        />
        <ToolButton icon="next" label="Nächste Seite" className="w-[44px] text-[#6a6a6a]" />
        <ToolButton icon="last" label="Letzte Seite" className="w-[44px] text-[#6a6a6a]" />
        <span className="mx-[3px] h-[24px] w-px bg-[#8a8a8a]" />
        <ToolButton icon="back" label="Zurück" className="w-[43px]" />
        <ToolButton icon="forward" label="Vor" className="w-[44px] text-[#6a6a6a]" />
        <button type="button" aria-label="Dimmer" className="ml-auto">
            <svg viewBox="0 0 24 24" className="size-[22px]" fill="none" stroke="currentColor" strokeWidth={2} aria-hidden="true">
                <circle cx="12" cy="12" r="10" />
                <path d="M12 2a10 10 0 0 0 0 20z" fill="currentColor" />
            </svg>
        </button>
        <span className="pr-[14px] pl-[23px] text-[21px] whitespace-nowrap">118,90 x 84,10 cm</span>
        <button type="button" className="h-[42px] w-[83px] bg-[#87591e] text-[21px]">1:100</button>
    </div>
);

const StatusBar: React.FC = () => (
    <footer className="flex h-[43px] items-center border-t border-black text-[18px] whitespace-nowrap">
        <span className="pl-[2px] text-[#8a8a8a]">Bereit</span>
        <div className="ml-auto flex">
            <ToolButton icon="raster" label="Raster" className="h-[42px] w-[44px]" />
            <ToolButton icon="snapGrid" label="Am Raster ausrichten" className="h-[42px] w-[44px]" />
            <ToolButton icon="snapDoc" label="Am Inhalt ausrichten" className="h-[42px] w-[43px] bg-[#195a89]" />
            <ToolButton icon="snapPen" label="An Markierung ausrichten" className="h-[42px] w-[45px]" />
            <ToolButton icon="reuse" label="Wiederverwenden" className="h-[42px] w-[44px] bg-[#195a89]" />
            <ToolButton icon="sync" label="Ansichten synchronisieren" className="h-[42px] w-[43px] bg-[#195a89]" />
            <ToolButton icon="chevronDown" label="Weitere Optionen" className="w-[20px]" iconClass="size-5" />
        </div>
        <span className="w-[82px] pl-[36px]">1:100</span>
        <span className="w-[212px] pl-[37px]">118,90 x 84,10 cm</span>
        <span className="w-[172px] pl-[37px]">(46,53. 42,23)</span>
        <svg viewBox="0 0 16 16" className="mr-[2px] size-[14px] self-end" fill="currentColor" aria-hidden="true">
            <path d="M12 0h3v3h-3zM12 6h3v3h-3zM6 6h3v3H6zM12 12h3v3h-3zM6 12h3v3H6zM0 12h3v3H0z" />
        </svg>
    </footer>
);

const App: React.FC = () => {
    return (
        <div className="min-h-screen overflow-hidden bg-white font-['Roboto',sans-serif] text-white">
            {/* Laptop lid */}
            <div className="mr-[181px] ml-[183px] rounded-t-[48px] bg-linear-to-b from-[#575553] via-[#3b3b3b] to-[#1b1b1b] pt-[47px] pr-[41px] pb-[116px] pl-[37px]">
                <div className="bg-black pr-[3px] pb-[5px] pl-[4px]">
                    <TitleBar />
                    <div className="bg-[#2d2d2d]">
                        <Toolbar />
                        <SessionBar />
                        <div className="flex">
                            <main className="min-w-0 flex-1">
                                <div className="flex">
                                    <LeftToolbar />
                                    <div className="min-w-0 flex-1">
                                        <DocumentTabs />
                                        <div className="flex">
                                            <FloorPlan />
                                            <div className="flex w-[25px] shrink-0 justify-center bg-[#f0f0f0] pt-[314px]">
                                                <div className="h-[92px] w-[7px] bg-[#868684]" />
                                            </div>
                                        </div>
                                        <DocumentBar />
                                    </div>
                                </div>
                                <MarkupPanel />
                            </main>
                            <RightToolbar />
                        </div>
                        <StatusBar />
                    </div>
                </div>
            </div>
            {/* Laptop base */}
            <div className="mx-[3px] mb-[26px] h-[87px] rounded-t-[10px] rounded-b-[74px] bg-linear-to-b from-[#363636] via-[#1c1c1c] to-black shadow-[0_10px_14px_rgba(0,0,0,0.35)]" />
        </div>
    );
};

export default App;
